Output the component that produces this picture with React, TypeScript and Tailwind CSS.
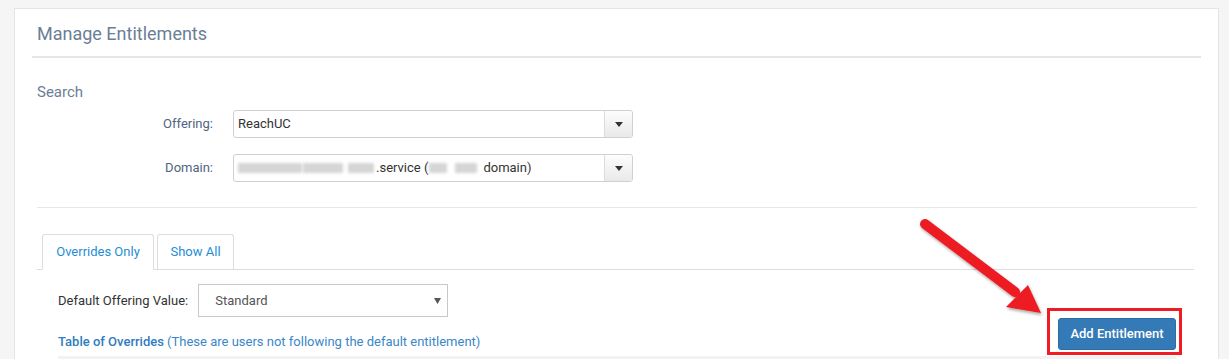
import React from "react";

function Caret() {
  return (
    <svg width="8" height="5" viewBox="0 0 8 5">
      <path d="M0 0 L8 0 L4 5 Z" fill="#333" />
    </svg>
  );
}

function Select({ children }: { children: React.ReactNode }) {
  return (
    <div className="flex h-[28px] w-[400px] items-stretch rounded-[3px] border border-[#d0d0d0] bg-white">
      <div className="flex flex-1 items-center overflow-hidden pl-[4px] text-[13px] text-[#333]">{children}</div>
      <div className="flex w-[28px] items-center justify-center rounded-r-[3px] border-l border-[#dcdcdc] bg-gradient-to-b from-[#fdfdfd] to-[#e9e9e9]">
        <Caret />
      </div>
    </div>
  );
}

function Blur({ w }: { w: number }) {
  return (
    <span
      className="inline-block h-[10px] bg-[#c4c4c4] opacity-70 blur-[1.5px]"
      style={{ width: w }}
    />
  );
}

export default function App() {
  return (
    <div
      className="relative h-[359px] overflow-hidden bg-[#f5f5f5] pl-[14px] pt-[8px]"
      style={{ fontFamily: "Roboto, 'Liberation Sans', sans-serif" }}
    >
      <div className="h-[400px] w-[1205px] border border-[#e3e3e8] bg-white px-[17px]">
        {/* header */}
        <div className="flex h-[49px] items-center border-b-2 border-[#e3e7eb] pl-[5px] pt-[1px]">
          <h1 className="text-[18px] font-normal text-[#6b7e96]">Manage Entitlements</h1>
        </div>

        <div className="pl-[5px] pr-[4px]">
          <div className="mt-[24px] text-[15px] leading-[20px] text-[#6b7e96]">Search</div>

          <div className="mt-[8px] flex flex-col gap-[16px]">
            <div className="flex items-center">
              <label className="w-[176px] text-right text-[13px] text-[#4f6580]">Offering:</label>
              <div className="ml-[20px]">
                <Select>ReachUC</Select>
              </div>
            </div>
            <div className="flex items-center">
              <label className="w-[176px] text-right text-[13px] text-[#4f6580]">Domain:</label>
              <div className="ml-[20px]">
                <Select>
                  <span className="flex items-center gap-[1px]">
                    <Blur w={64} />
                    <Blur w={40} />
                    <span className="w-[3px]" />
                    <Blur w={26} />
                    <span className="ml-[1px]">.service (</span>
                    <Blur w={18} />
                    <span className="w-[6px]" />
                    <Blur w={22} />
                    <span className="ml-[5px]">domain)</span>
                  </span>
                </Select>
              </div>
            </div>
          </div>

          <div className="mt-[25px] border-t border-[#e8e8e8]" />

          {/* tabs */}
          <div className="mt-[26px] mr-[3px] flex h-[36px] items-end border-b border-[#dddddd] pl-[5px]">
            <div className="-mb-[1px] flex h-[36px] w-[112px] items-center justify-center rounded-t-[3px] border border-b-white border-[#dddddd] bg-white text-[13px] text-[#1f8dd6]">
              Overrides Only
            </div>
            <div className="ml-[3px] flex h-[35px] w-[77px] items-center justify-center rounded-t-[3px] border border-b-0 border-[#dddddd] text-[13px] text-[#1f8dd6]">
              Show All
            </div>
          </div>

          {/* tab content */}
          <div className="pl-[21px] pr-[21px]">
            <div className="flex justify-between">
              <div className="flex flex-col">
                <div className="mt-[14px] flex items-center">
                  <span className="text-[13px] text-[#333]">Default Offering Value:</span>
                  <div className="ml-[10px] flex h-[33px] w-[250px] items-center justify-between border border-[#c8c8c8] bg-white pl-[16px] pr-[6px] text-[13px] text-[#555]">
                    <span>Standard</span>
                    <svg width="7" height="6" viewBox="0 0 7 6">
                      <path d="M0 0 L7 0 L3.5 6 Z" fill="#555" />
                    </svg>
                  </div>
                </div>
                <div className="mt-[16px] text-[13px] leading-[18px] text-[#3a87c7]">
                  <span className="font-medium text-[#2f7cc0]">Table of Overrides</span> (These are users not following the default entitlement)
                </div>
              </div>
              <button className="mt-[48px] flex h-[32px] w-[118px] items-center justify-center rounded-[3px] border border-[#2e6da4] bg-[#337ab7] text-[13px] font-medium text-white">
                Add Entitlement
              </button>
            </div>
            <div className="mt-[5px] h-[20px] bg-[#f2f2f2]" />
          </div>
        </div>
      </div>

      {/* annotation: red box */}
      <div className="absolute left-[1047px] top-[308px] h-[47px] w-[135px] border-[3px] border-[#ef1c24]" />

      {/* annotation: arrow */}
      <svg className="absolute left-0 top-0" width="1229" height="359" style={{ pointerEvents: "none" }}>
        <defs>
          <filter id="sh" x="-20%" y="-20%" width="140%" height="140%">
            <feDropShadow dx="1" dy="2" stdDeviation="1.5" floodColor="#000" floodOpacity="0.35" />
          </filter>
        </defs>
        <g filter="url(#sh)">
          <line x1="925" y1="224" x2="1015" y2="292" stroke="#ec1c24" strokeWidth="10" strokeLinecap="round" />
          <path d="M1006 307 L1028 285 L1041 313 Z" fill="#ec1c24" />
        </g>
      </svg>
    </div>
  );
}
